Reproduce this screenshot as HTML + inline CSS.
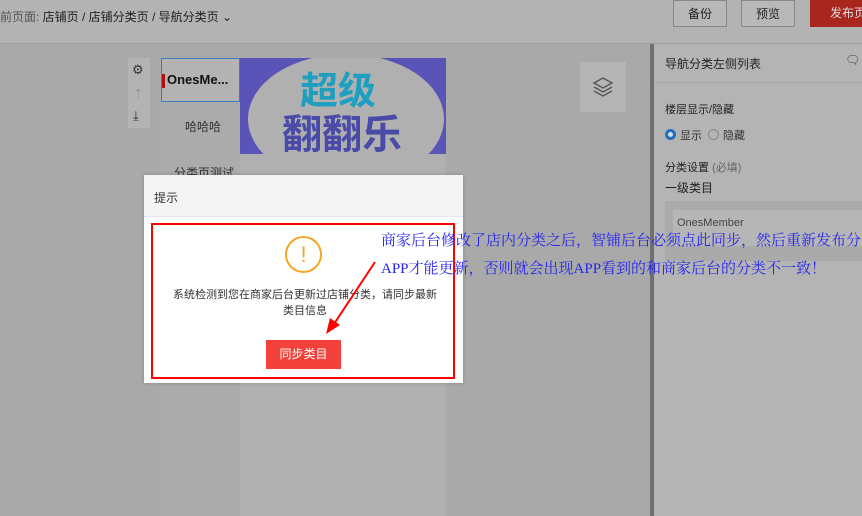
<!DOCTYPE html>
<html><head><meta charset="utf-8"><style>
*{margin:0;padding:0;box-sizing:border-box}
body{width:862px;height:516px;overflow:hidden;background:#a9a9a9;font-family:"Liberation Sans","Noto Sans CJK SC",sans-serif;position:relative;font-size:12px;color:#333}
.a{position:absolute}
</style></head><body>
<div class="a" style="left:0;top:0;width:862px;height:44px;background:#b3b3b3;border-bottom:1px solid #a0a0a0"></div>
<div class="a" style="left:0;top:8px;font-size:12px;color:#555">前页面: <span style="color:#222">店铺页 / 店铺分类页 / 导航分类页 ⌄</span></div>
<div class="a" style="left:673px;top:0;width:54px;height:27px;border:1px solid #888;background:#b8b8b8;text-align:center;line-height:26px;color:#222">备份</div>
<div class="a" style="left:741px;top:0;width:54px;height:27px;border:1px solid #888;background:#b8b8b8;text-align:center;line-height:26px;color:#222">预览</div>
<div class="a" style="left:810px;top:0;width:60px;height:27px;background:#a8261e;color:#ddd;line-height:26px;padding-left:20px">发布页</div>

<div class="a" style="left:128px;top:58px;width:22px;height:70px;background:#b3b3b3"></div>
<div class="a" style="left:132px;top:62px;font-size:13px;color:#333">⚙</div>
<div class="a" style="left:133px;top:86px;font-size:13px;color:#999">⇡</div>
<div class="a" style="left:133px;top:108px;font-size:13px;color:#333">⤓</div>

<div class="a" style="left:160px;top:58px;width:80px;height:458px;background:#ababab"></div>
<div class="a" style="left:240px;top:153px;width:206px;height:363px;background:#b0b0b0"></div>
<div class="a" style="left:161px;top:58px;width:79px;height:44px;border:1px solid #3a7cc0;background:#b3b3b3;font-weight:bold;font-size:13px;line-height:42px;padding-left:5px;color:#111">OnesMe...</div>
<div class="a" style="left:162px;top:74px;width:3px;height:14px;background:#b01010"></div>
<div class="a" style="left:185px;top:118px;color:#333">哈哈哈</div>
<div class="a" style="left:174px;top:164px;color:#333">分类页测试</div>
<div class="a" style="left:240px;top:58px;width:206px;height:96px;background:#5a54b8;overflow:hidden">
<div class="a" style="left:8px;top:-4px;width:196px;height:130px;border-radius:50%;background:#b0b0b0"></div>
<div class="a" style="left:60px;top:2px;font-size:38px;font-weight:bold;color:#1f9fbf">超级</div>
<div class="a" style="left:42px;top:44px;font-size:40px;font-weight:bold;color:#4a4aa8">翻翻乐</div>
</div>

<div class="a" style="left:580px;top:62px;width:46px;height:50px;background:#b5b5b5"></div>
<svg class="a" style="left:591px;top:75px" width="24" height="24" viewBox="0 0 24 24" fill="none" stroke="#555" stroke-width="1.4"><path d="M12 3 L21 8 L12 13 L3 8Z M3 12 L12 17 L21 12 M3 16 L12 21 L21 16"/></svg>

<div class="a" style="left:650px;top:44px;width:4px;height:472px;background:#6f6f6f"></div>
<div class="a" style="left:654px;top:44px;width:208px;height:472px;background:#b4b4b4"></div>
<div class="a" style="left:654px;top:82px;width:208px;height:1px;background:#a6a6a6"></div>
<div class="a" style="left:665px;top:55px;color:#222">导航分类左侧列表</div>
<div class="a" style="left:845px;top:53px;color:#444">🗨</div>
<div class="a" style="left:665px;top:101px;font-size:11px;color:#222">楼层显示/隐藏</div>
<div class="a" style="left:665px;top:129px;width:11px;height:11px;border-radius:50%;border:3px solid #1f6fbf;background:#ddd"></div>
<div class="a" style="left:680px;top:127px;font-size:11px;color:#333">显示</div>
<div class="a" style="left:708px;top:129px;width:11px;height:11px;border-radius:50%;border:1px solid #888"></div>
<div class="a" style="left:723px;top:127px;font-size:11px;color:#333">隐藏</div>
<div class="a" style="left:665px;top:159px;font-size:11px;color:#222">分类设置 <span style="color:#666">(必填)</span></div>
<div class="a" style="left:665px;top:179px;font-size:12px;color:#222">一级类目</div>
<div class="a" style="left:665px;top:201px;width:197px;height:60px;background:#aaa"></div>
<div class="a" style="left:673px;top:210px;width:189px;height:36px;background:#b6b6b6;padding:7px 4px;font-size:11px;color:#444">OnesMember</div>

<div class="a" style="left:144px;top:175px;width:319px;height:208px;background:#fff;box-shadow:0 0 4px rgba(0,0,0,.2)"></div>
<div class="a" style="left:144px;top:175px;width:319px;height:42px;background:#f4f4f4;border-bottom:1px solid #e6e6e6;padding:14px 10px;color:#333">提示</div>
<div class="a" style="left:151px;top:223px;width:304px;height:156px;border:2px solid #f00"></div>
<div class="a" style="left:285px;top:236px;width:37px;height:37px;border:2px solid #f5a623;border-radius:50%;text-align:center;line-height:33px;color:#f5a623;font-size:22px">!</div>
<div class="a" style="left:170px;top:287px;width:270px;text-align:center;font-size:11px;line-height:16px;color:#333">系统检测到您在商家后台更新过店铺分类，请同步最新<br>类目信息</div>
<div class="a" style="left:266px;top:340px;width:75px;height:29px;background:#f2413a;color:#fff;text-align:center;line-height:29px;font-size:12px">同步类目</div>
<svg class="a" style="left:0;top:0" width="862" height="516"><path d="M375 262 L332 327" stroke="#f00" stroke-width="2"/><path d="M326 334 L330 318 L340 325Z" fill="#f00"/></svg>
<div class="a" style="left:381px;top:227px;white-space:nowrap;font-family:'Liberation Serif','Noto Serif CJK SC',serif;font-size:15px;color:#2525f0;line-height:28px">商家后台修改了店内分类之后，智铺后台必须点此同步，然后重新发布分<br>APP才能更新，否则就会出现APP看到的和商家后台的分类不一致！</div>
</body></html>
